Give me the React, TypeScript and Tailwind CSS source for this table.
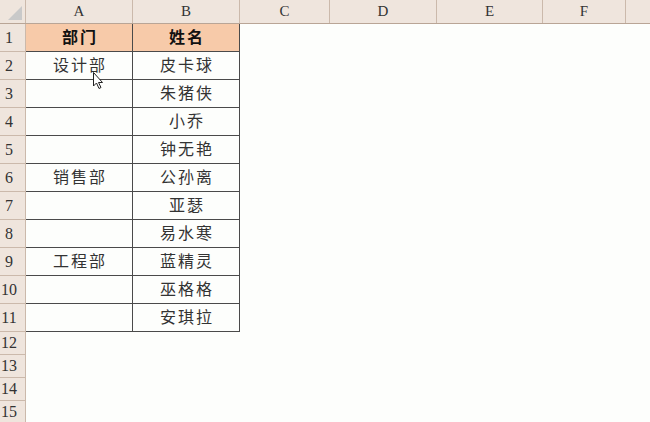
const cols = [
  { key: "A", w: "w-[107px]" },
  { key: "B", w: "w-[107px]" },
  { key: "C", w: "w-[90px]" },
  { key: "D", w: "w-[107px]" },
  { key: "E", w: "w-[106px]" },
  { key: "F", w: "w-[83px]" },
];

const rows: [string, string][] = [
  ["部门", "姓名"],
  ["设计部", "皮卡球"],
  ["", "朱猪侠"],
  ["", "小乔"],
  ["", "钟无艳"],
  ["销售部", "公孙离"],
  ["", "亚瑟"],
  ["", "易水寒"],
  ["工程部", "蓝精灵"],
  ["", "巫格格"],
  ["", "安琪拉"],
];

const font = { fontFamily: '"Liberation Serif", "Noto Sans CJK SC", serif' };

function RowHead({ n, h }: { n: number; h: string }) {
  return (
    <div className={`w-[26px] shrink-0 ${h} bg-[#efe5dd] border-b border-r border-[#cbb9ab] flex items-center`}>
      <span className="w-[18px] text-center text-[16px] leading-none text-[#333]">{n}</span>
    </div>
  );
}

function Cell({ text, head }: { text: string; head: boolean }) {
  return (
    <div
      className={`w-[107px] shrink-0 h-[28px] border-b border-r border-[#4a4a4a] flex items-center justify-center text-[16px] tracking-[2px] pl-[2px] ${
        head ? "bg-[#f7caa9] font-bold text-[#111]" : "text-[#333]"
      }`}
    >
      {text}
    </div>
  );
}

export default function App() {
  return (
    <div className="relative w-[650px] h-[422px] overflow-hidden bg-[#fdfefc] text-[#222]" style={font}>
      {/* column headers */}
      <div className="flex h-[24px] bg-[#efe5dd] border-b border-[#b9a596]">
        <div className="w-[26px] shrink-0 border-r border-[#cbb9ab] relative">
          <div className="absolute right-[3px] bottom-[3px] w-0 h-0 border-l-[14px] border-l-transparent border-b-[14px] border-b-[#c9c9c9]" />
        </div>
        {cols.map((c) => (
          <div key={c.key} className={`${c.w} shrink-0 border-r border-[#cbb9ab] flex items-center justify-center text-[15px] text-[#333]`}>
            {c.key}
          </div>
        ))}
        <div className="flex-1" />
      </div>

      {rows.map(([a, b], i) => (
        <div key={i} className="flex">
          <RowHead n={i + 1} h="h-[28px]" />
          <Cell text={a} head={i === 0} />
          <Cell text={b} head={i === 0} />
        </div>
      ))}

      {[12, 13, 14, 15].map((n) => (
        <div key={n} className="flex">
          <RowHead n={n} h="h-[23px]" />
        </div>
      ))}

      {/* mouse cursor */}
      <svg className="absolute left-[93px] top-[72px]" width="11" height="18" viewBox="0 0 11 18">
        <path d="M0.5 0.5 L0.5 14 L3.5 11 L6 16.5 L8 15.5 L5.5 10.5 L9.5 10.5 Z" fill="#fff" stroke="#222" strokeWidth="1" strokeLinejoin="round" />
      </svg>
    </div>
  );
}
